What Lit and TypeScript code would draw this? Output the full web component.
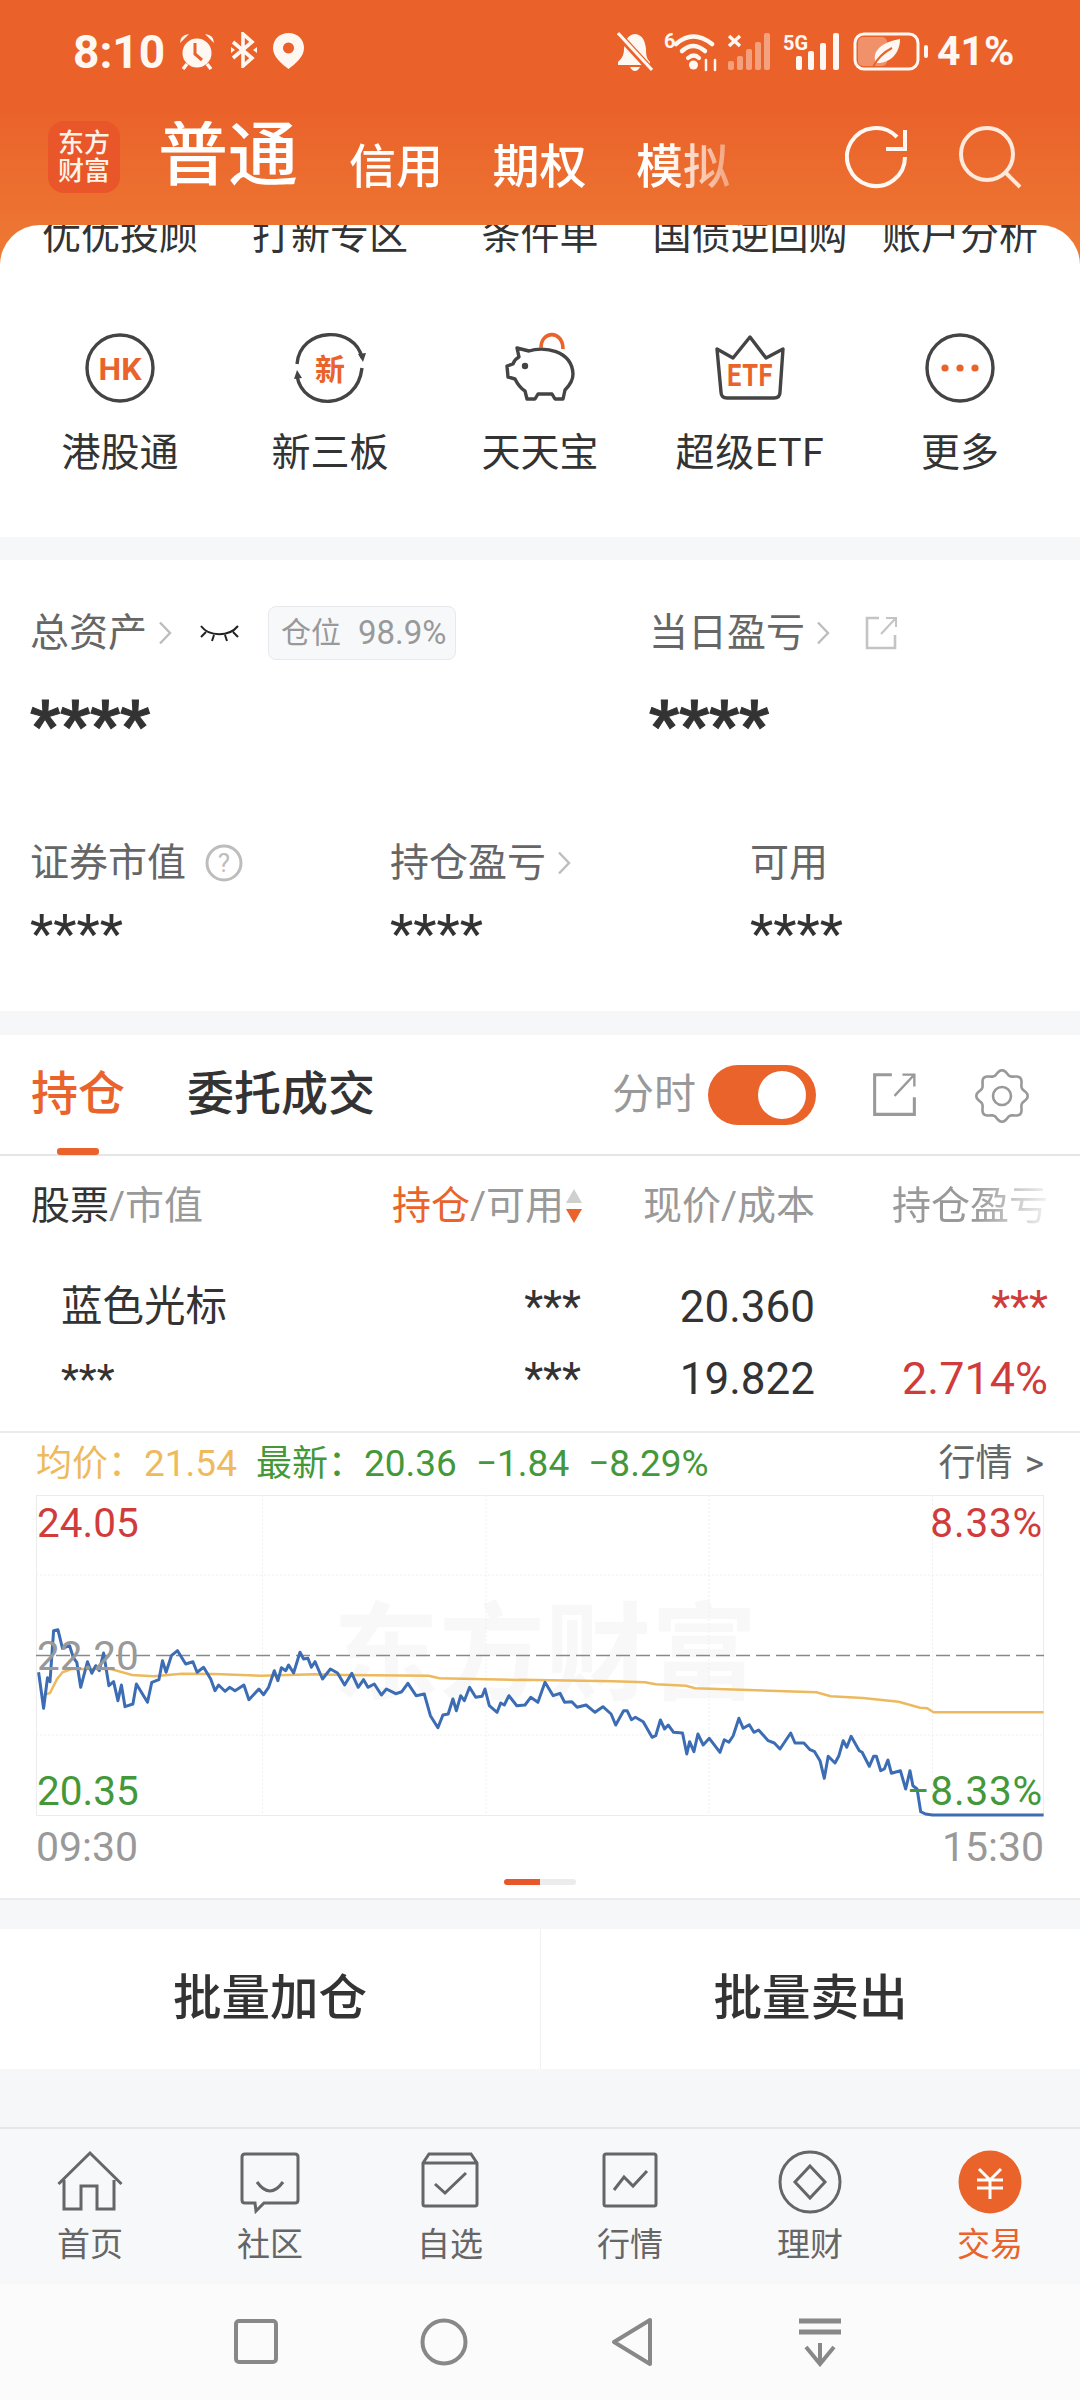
import { LitElement, html, css, svg } from "lit"
import { customElement } from "lit/decorators.js"

const ORANGE = "#e9632b"

// chart points read off the reference, in the crop coordinates of the two chart crops
const BLUE_A = [[108,700],[122,808],[133,716],[140,728],[150,575],[162,572],[175,628],[195,620],[205,655],[215,670],[226,745],[245,668],[257,703],[268,680],[278,695],[290,642],[305,740],[318,728],[330,785],[340,738],[350,803],[372,795],[382,735],[413,790],[425,730],[445,722],[455,665],[465,700],[480,650],[497,635],[520,675],[540,668],[552,700],[570,685],[590,720],[602,755],[612,738],[630,757],[643,745],[658,755],[683,738],[697,782],[725,750],[738,767],[752,745],[768,695],[778,725],[788,686],[800,695],[808,678],[822,702],[840,640],[850,660],[862,658],[872,685],[882,668],[903,720],[925,690],[945,702],[965,738],[985,703],[1003,745],[1018,722],[1030,745],[1048,735],[1068,768],[1082,750],[1108,764],[1125,758],[1142,733],[1165,770],[1188,765],[1205,830],[1226,866],[1240,828],[1255,825],[1268,780],[1278,815],[1290,770],[1300,785],[1315,745],[1332,775],[1350,772],[1358,750],[1370,800],[1392,820],[1402,792],[1412,798],[1425,770],[1447,800],[1470,798]]
const BLUE_B = [[30,775],[50,790],[70,730],[93,770],[112,763],[125,790],[145,788],[160,805],[185,798],[210,820],[232,803],[255,825],[268,858],[290,815],[300,815],[312,842],[323,835],[345,848],[370,895],[380,890],[393,843],[405,870],[415,858],[430,880],[455,882],[467,945],[475,908],[487,938],[498,885],[513,918],[530,898],[560,940],[572,902],[585,910],[597,890],[613,838],[625,868],[642,857],[655,880],[668,873],[695,905],[712,912],[728,930],[758,882],[770,912],[795,912],[812,932],[825,938],[840,965],[852,1018],[863,952],[882,972],[893,950],[905,905],[915,925],[927,892],[950,935],[958,940],[978,982],[990,952],[998,952],[1010,995],[1020,990],[1030,963],[1040,1003],[1065,995],[1080,1050],[1092,995],[1100,1040],[1112,1050],[1122,1118],[1135,1125],[1155,1128],[1466,1128]]
const AVG_A = [[122,768],[140,762],[160,720],[175,700],[200,690],[250,690],[310,690],[370,708],[430,712],[510,704],[600,705],[730,710],[880,706],[960,708],[1200,710],[1230,718],[1450,723]]
const AVG_B = [[0,722],[260,727],[350,730],[380,736],[465,740],[490,748],[830,760],[870,772],[960,777],[1060,788],[1120,806],[1140,808],[1158,820],[1466,820]]

function toChart(a: number[][], b: number[][]) {
  const left = a.map(([x, y]) => [x / 2.8 - 36, 1440 + y / 3 - 1496])
  const right = b.map(([x, y]) => [520 + x / 2.8 - 36, 1440 + y / 3 - 1496])
  return [...left, ...right].map(([x, y]) => `${x.toFixed(1)},${y.toFixed(1)}`).join(" ")
}

function gearPath(cx: number, cy: number) {
  const pts: string[] = []
  for (let i = 0; i < 96; i++) {
    const t = (i / 96) * Math.PI * 2
    const r = 23.5 + 2.2 * Math.cos(8 * t)
    pts.push(`${(cx + r * Math.sin(t)).toFixed(1)},${(cy - r * Math.cos(t)).toFixed(1)}`)
  }
  return pts.join(" ")
}

const chevron = (w = 16, h = 24) => html`<svg class="chev" width=${w} height=${h} viewBox="0 0 16 24" fill="none" stroke="#bdbdbd" stroke-width="2.4"><polyline points="3,1.5 13,12 3,22.5"/></svg>`

const openIcon = (size: number, color: string, sw: number) => html`<svg width=${size} height=${size} viewBox="0 0 34 34" fill="none" stroke=${color} stroke-width=${sw}>
  <path d="M15 2H3v30h28V19"/><path d="M17 18 31 3M22 2h10v9" stroke-width=${sw * 0.8}/></svg>`

const shortcutIcons = [
  svg`<circle cx="35" cy="35" r="33" stroke="#444" stroke-width="3.4" fill="none"/><text x="35" y="47" text-anchor="middle" class="svgt" font-size="32" font-weight="700" fill=${ORANGE}>HK</text>`,
  svg`<path d="M2 31C5 -6 60 -8 67 25M67 35C62 78 8 78 2 43" stroke="#444" stroke-width="3.4" fill="none"/><path d="M63 21 68 29 71 20ZM-1 46 2 37 7 45Z" fill="#444"/><text x="35" y="47" text-anchor="middle" class="svgt" font-size="30" font-weight="700" fill=${ORANGE}>新</text>`,
  svg`<path d="M12 15 24 18C38 13 67 17 68 41 68 48 64 53 60 57L58 66H50L47 61H33L30 66H22L20 58C15 55 12 50 10 46L3 44 2 33 8 31C9 28 12 25 14 24Z" stroke="#444" stroke-width="3.4" fill="none" stroke-linejoin="round"/><circle cx="20" cy="33" r="3.2" fill="#444"/><path d="M36 15C36 -3 58 -3 58 16" stroke=${ORANGE} stroke-width="3.6" fill="none"/>`,
  svg`<path d="M2 15 18 24 35 3 51 24 68 15 65 58Q65 64 59 64H12Q6 64 6 58Z" transform="translate(0 1)" stroke="#444" stroke-width="3.4" fill="none" stroke-linejoin="round"/><text x="35" y="53" text-anchor="middle" class="svgt" font-size="31" font-weight="700" textLength="46" lengthAdjust="spacingAndGlyphs" fill=${ORANGE}>ETF</text>`,
  svg`<circle cx="35" cy="35" r="33" stroke="#444" stroke-width="3.4" fill="none"/><circle cx="20" cy="35" r="3.6" fill=${ORANGE}/><circle cx="35" cy="35" r="3.6" fill=${ORANGE}/><circle cx="50" cy="35" r="3.6" fill=${ORANGE}/>`,
]

const navIcons = [
  svg`<path d="M1.5 34 33 3 64.5 34M7 30V59H24V36H40V59H57V30" fill="none" stroke="#666" stroke-width="3"/>`,
  svg`<path d="M5 4H55Q58 4 58 7V50Q58 53 55 53H24L16 61 15 53H5Q2 53 2 50V7Q2 4 5 4Z" fill="none" stroke="#666" stroke-width="3"/><path d="M17 32Q30 50 43 32" fill="none" stroke="#666" stroke-width="3"/>`,
  svg`<path d="M2 13 8 4H50L56 13V54Q56 56 54 56H4Q2 56 2 54ZM2 13H56" fill="none" stroke="#666" stroke-width="3"/><path d="M14 35 24 44 45 24" transform="translate(0 -1)" fill="none" stroke="#666" stroke-width="3"/>`,
  svg`<rect x="3" y="4" width="52" height="52" rx="2" fill="none" stroke="#666" stroke-width="3"/><path d="M13 40 23 27 32 36 46 21" fill="none" stroke="#666" stroke-width="3"/>`,
  svg`<circle cx="32" cy="32" r="30" fill="none" stroke="#666" stroke-width="3"/><path d="M32 16 47 32 32 48 17 32Z" fill="none" stroke="#666" stroke-width="3"/>`,
  svg`<circle cx="32" cy="32" r="31.5" fill=${ORANGE}/><path d="M21 19 32 30 43 19M19 30H45M19 38H45M32 30V49" fill="none" stroke="#fff" stroke-width="3"/>`,
]

@customElement("app-root")
export class AppRoot extends LitElement {
  static styles = css`
    :host {
      display: block;
      width: 1080px;
      height: 2400px;
      overflow: hidden;
      background: #f6f7f9;
      font-family: Roboto, "Noto Sans CJK SC", sans-serif;
      color: #333;
    }
    svg { display: block; flex: none; }
    .svgt { font-family: Roboto, "Noto Sans CJK SC", sans-serif; }

    .top {
      background: linear-gradient(#ea622a 40%, #ee7b35) no-repeat;
      background-size: 100% 270px;
    }
    .status {
      height: 100px;
      display: flex;
      align-items: flex-start;
      color: #fff7f2;
      font-weight: 700;
      padding: 32px 0 0 73px;
      box-sizing: border-box;
    }
    .time { font-size: 46px; line-height: 40px; width: 92px; margin-right: 13px; }
    .status-left { display: flex; gap: 14px; }
    .status-right { display: flex; align-items: flex-start; margin-left: auto; }
    .pct { font-size: 41px; line-height: 38px; width: 143px; box-sizing: border-box; }

    .title-row {
      height: 125px;
      box-sizing: border-box;
      padding: 21px 58px 0 48px;
      display: flex;
      align-items: flex-start;
      color: #fff;
    }
    .logo {
      width: 72px;
      height: 72px;
      border-radius: 16px;
      background: #e8562a;
      color: #fff3e8;
      font-size: 26px;
      line-height: 28px;
      font-weight: 500;
      text-align: center;
      padding-top: 8px;
      box-sizing: border-box;
      margin-right: 38px;
    }
    .acct-tabs {
      display: flex;
      align-items: flex-end;
      height: 70px;
      width: 574px;
      -webkit-mask-image: linear-gradient(90deg, #000 510px, rgba(0,0,0,.35) 574px);
      mask-image: linear-gradient(90deg, #000 510px, rgba(0,0,0,.35) 574px);
    }
    .acct-tabs span { font-size: 47px; line-height: 47px; margin-left: 49.5px; margin-bottom: 1px; font-weight: 500; white-space: nowrap; }
    .acct-tabs span.main { font-size: 70px; line-height: 70px; margin: 0 1.5px 0 0; }
    .title-icons { margin-left: auto; display: flex; gap: 49px; margin-top: 4px; }

    .card {
      background: #fff;
      border-radius: 40px 40px 0 0;
      height: 312px;
      overflow: hidden;
    }
    .clipped, .shortcuts { display: grid; grid-template-columns: repeat(5, 210px); padding: 0 15px; text-align: center; }
    .clipped { font-size: 39px; line-height: 38px; margin-top: -8px; color: #333; white-space: nowrap; }
    .shortcuts { margin-top: 78px; font-size: 39px; line-height: 38px; }
    .shortcuts svg { margin: 0 auto 31px; overflow: visible; }
    .shortcuts .latin { letter-spacing: 0.7px; }

    .assets { background: #fff; height: 451px; margin-top: 23px; padding: 0 30px; box-sizing: border-box; }
    .label { display: flex; align-items: center; font-size: 39px; line-height: 40px; height: 40px; color: #666; }
    .a-top { display: grid; grid-template-columns: 619px 1fr; padding-top: 53px; }
    .big { font-size: 66px; font-weight: 700; line-height: 67px; height: 67px; margin-top: 39px; color: #333; -webkit-text-stroke: 1px #333; }
    .a-bot { display: grid; grid-template-columns: repeat(3, 360px); margin-top: 84px; }
    .small { font-size: 54px; line-height: 53px; height: 53px; margin-top: 24px; color: #333; }
    .chev { margin-left: 10px; }
    .pill {
      display: flex;
      align-items: center;
      gap: 17px;
      width: 188px;
      height: 54px;
      box-sizing: border-box;
      padding-left: 12px;
      border: 1px solid #e8e9ec;
      border-radius: 8px;
      background: #f7f8fa;
      color: #999;
      font-size: 30px;
    }
    .pill b { font-weight: 400; font-size: 33px; }

    .positions { background: #fff; margin-top: 24px; }
    .pos-tabs { height: 121px; box-sizing: border-box; border-bottom: 2px solid #e6e6e6; display: flex; padding: 35px 0 0 31px; position: relative; }
    .pos-tabs > span { font-size: 47px; line-height: 47px; font-weight: 500; }
    .pos-tabs .alt { margin-left: 62px; }
    .bar { position: absolute; left: 57px; bottom: -1px; width: 42px; height: 7px; border-radius: 3px; background: #e9632b; }
    .pos-ctl { margin-left: auto; display: flex; align-items: flex-start; }
    .pos-ctl .fs { font-size: 42px; line-height: 41px; color: #999; margin-top: 4px; margin-right: 12px; }
    .toggle { width: 108px; height: 60px; border-radius: 30px; background: #e9632b; margin-top: -5px; margin-right: 56px; position: relative; }
    .toggle i { position: absolute; right: 10px; top: 6px; width: 48px; height: 48px; border-radius: 50%; background: #fff; }

    .thead, .trow { display: grid; font-size: 39px; line-height: 40px; }
    .thead { grid-template-columns: 361px 190px 233px 233px; padding: 30px 0 0 31px; height: 93px; box-sizing: border-box; color: #999; }
    .thead .r { text-align: right; }
    .thead .d { color: #333; }
    .thead .o { color: #e9632b; }
    .sorted { position: relative; white-space: nowrap; }
    .sort { position: absolute; right: -1px; top: 2px; }
    .fade {
      margin-left: 30px;
      white-space: nowrap;
      -webkit-mask-image: linear-gradient(90deg, #000 130px, transparent 215px);
      mask-image: linear-gradient(90deg, #000 130px, transparent 215px);
    }
    .trow { grid-template-columns: 329px 191px 234px 233px; padding-left: 61px; font-size: 44px; }
    .trow > div { text-align: right; height: 72px; line-height: 72px; }
    .trow > div.name { text-align: left; font-size: 41.5px; }
    .trow > div.pct-val { font-size: 45px; }
    .rows { padding-top: 22px; height: 184px; box-sizing: border-box; border-bottom: 2px solid #eaeaea; }
    .up { color: #d03c3c; }

    .legend { display: flex; height: 62px; padding: 8px 36px 0; font-size: 37px; line-height: 46px; gap: 19px; white-space: nowrap; box-sizing: border-box; }
    .legend span { flex: none; }
    .legend b { font-weight: 400; font-size: 36px; }
    .avg { color: #eeba5c; }
    .dn { color: #44983a; }
    .legend .more { margin-left: auto; color: #666; word-spacing: 3px; }

    .chart { position: relative; margin-left: 36px; width: 1008px; height: 321px; }
    .chart svg { position: absolute; left: 0; top: 0; overflow: visible; }
    .wm { position: absolute; left: 297px; top: 107px; font-size: 106px; line-height: 106px; font-weight: 700; color: #f8f8f8; white-space: nowrap; }
    .tick { position: absolute; font-size: 40.5px; line-height: 40px; }
    .t1 { top: 8px; }
    .t2 { top: 141px; }
    .t3 { top: 276px; }
    .tl { left: 1px; }
    .tr { right: 1px; letter-spacing: 0.8px; }
    .grey { color: #999; }
    .times { display: flex; justify-content: space-between; padding: 11px 36px 0; font-size: 41px; line-height: 40px; color: #999; height: 63px; box-sizing: border-box; }
    .pager { display: flex; justify-content: center; height: 19px; }
    .pager i { width: 36px; height: 6px; background: #ececec; border-radius: 0 3px 3px 0; }
    .pager i:first-child { background: #e8562a; border-radius: 3px 0 0 3px; }

    .chart-wrap { background: #fff; height: 467px; border-bottom: 2px solid #ececec; box-sizing: border-box; }

    .batch { display: grid; grid-template-columns: 540px 540px; background: #fff; height: 140px; margin-top: 29px; text-align: center; font-size: 48.5px; font-weight: 500; line-height: 140px; }
    .batch div + div { border-left: 1px solid #f0f0f0; }

    .tabbar { margin-top: 58px; height: 157px; border-top: 2px solid #e6e7e9; box-sizing: border-box; display: grid; grid-template-columns: repeat(6, 180px); background: #f7f8fa; text-align: center; font-size: 33px; line-height: 34px; color: #666; }
    .tabbar svg { margin: 21px auto 14px; }
    .tabbar .act { color: #e9632b; }

    .sysnav { height: 116px; background: #fbfbfc; display: grid; grid-template-columns: repeat(4, 188px); padding-left: 162px; justify-items: center; padding-top: 33px; box-sizing: border-box; }
  `

  renderStatus() {
    return html`<div class="status">
      <div class="time">8:10</div>
      <div class="status-left">
        <svg width="38" height="38" viewBox="0 0 38 38" fill="#fff7f2">
          <circle cx="19" cy="21" r="14.500"/><path d="M17 11V22L24 28" stroke="#ea622a" stroke-width="3" fill="none"/>
          <path d="M2 11Q2 3 11 2ZM36 11Q36 3 27 2Z"/><path d="M9 32 5 37M29 32 33 37" stroke="#fff7f2" stroke-width="3.400"/>
        </svg>
        <svg width="28" height="36" viewBox="0 0 28 36" fill="none" stroke="#fff7f2" stroke-width="3.600"><path d="M3 10 22 26 13 34V2L22 10 3 26"/><path d="M1 15 5 18 1 21ZM27 15 23 18 27 21Z" fill="#fff7f2" stroke="none"/></svg>
        <svg width="33" height="38" viewBox="0 0 33 38"><path fill-rule="evenodd" fill="#fff7f2" d="M16.5 1C7.5 1 1 7.5 1 16 1 25 10 32 16.5 37 23 32 32 25 32 16 32 7.5 25.500 1 16.500 1ZM16.500 10.500A5.500 5.500 0 1 1 16.499 10.500Z"/></svg>
      </div>
      <div class="status-right">
        <svg width="36" height="40" viewBox="0 0 36 40" style="margin-right:11px" fill="#fff7f2">
          <path d="M18 2C10 3 8 9 7 17 7 24 4 27 1 30V33H33V30C30 27 29 24 29 17 28 9 26 3 18 2ZM13 35H23Q21 39 18 39 15 39 13 35Z"/>
          <path d="M0 1 34 38" stroke="#ea622a" stroke-width="7"/><path d="M1 1 35 38" stroke="#fff7f2" stroke-width="3"/>
        </svg>
        <svg width="54" height="40" viewBox="0 0 54 40" style="margin-right:9px" fill="none" stroke="#fff7f2" stroke-linecap="round">
          <text x="0" y="16" class="svgt" font-size="20" font-weight="700" fill="#fff7f2" stroke="none">6</text>
          <path d="M12 12Q29 -3 48 12" stroke-width="4.500"/><path d="M18 19Q29 9 41 19" stroke-width="4.500"/><path d="M24 26Q30 21 35 26" stroke-width="4.200"/>
          <circle cx="29.500" cy="33" r="4.500" fill="#fff7f2" stroke="none"/>
          <path d="M43 28V38M52 28V38" stroke-width="2.500" transform="translate(-1 0)"/>
        </svg>
        <svg width="44" height="40" viewBox="0 0 44 40" style="margin-right:12px" fill="#fff7f2">
          <g opacity=".42"><rect x="1" y="29" width="6" height="9" rx="2"/><rect x="10" y="24" width="6" height="14" rx="2"/><rect x="19" y="17" width="6" height="21" rx="2"/><rect x="28" y="10" width="6" height="28" rx="2"/><rect x="37" y="1" width="6" height="37" rx="2"/></g>
          <path d="M2 4 13 14M13 4 2 14" stroke="#fff7f2" stroke-width="3.400"/>
        </svg>
        <svg width="57" height="40" viewBox="0 0 57 40" style="margin-right:13px" fill="#fff7f2">
          <text x="0" y="18" class="svgt" font-size="21" font-weight="700" textLength="25" lengthAdjust="spacingAndGlyphs">5G</text>
          <rect x="13" y="24" width="6" height="14" rx="2"/><rect x="25" y="19" width="6" height="19" rx="2"/><rect x="37" y="11" width="6" height="27" rx="2"/><rect x="50" y="1" width="6" height="37" rx="2"/>
        </svg>
        <svg width="76" height="40" viewBox="0 0 76 40" fill="none" style="margin-right:8px">
          <rect x="2" y="2" width="63" height="35" rx="9" stroke="#fff7f2" stroke-width="3"/>
          <rect x="5" y="5" width="29" height="29" rx="5" fill="#fff7f2" opacity=".32"/>
          <path d="M23 31C18 20 28 10 47 7 47 22 36 32 23 31Z" fill="#fff7f2"/><path d="M20 35C25 25 31 20 39 16" stroke="#ea622a" stroke-width="2"/>
          <rect x="71" y="13" width="4" height="13" rx="2" fill="#fff7f2"/>
        </svg>
        <div class="pct">41%</div>
      </div>
    </div>`
  }

  renderTitle() {
    return html`<div class="title-row">
      <div class="logo">东方<br>财富</div>
      <div class="acct-tabs">
        <span class="main">普通</span><span>信用</span><span>期权</span><span>模拟</span>
      </div>
      <div class="title-icons">
        <svg width="64" height="64" viewBox="0 0 64 64" fill="none" stroke="#fff8f2" stroke-width="4"><path d="M52 12A29 29 0 1 0 60 32"/><path d="M42 24H61V5" transform="translate(-1 0)"/></svg>
        <svg width="64" height="64" viewBox="0 0 64 64" fill="none" stroke="#ffe9dc" stroke-width="4"><circle cx="29" cy="29" r="26"/><path d="M47 47 62 62"/></svg>
      </div>
    </div>`
  }

  renderAssets() {
    return html`<div class="assets">
      <div class="a-top">
        <div>
          <div class="label">总资产${chevron()}
            <svg style="margin:0 28px 0 26px" width="41" height="20" viewBox="0 0 41 20" fill="none" stroke="#222" stroke-width="2"><path d="M2 3C10 14 30 14 39 3M7 9 2 14M15 12 13 18M26 12 28 18M34 9 39 14"/></svg>
            <div class="pill">仓位<b>98.9%</b></div>
          </div>
          <div class="big">****</div>
        </div>
        <div>
          <div class="label">当日盈亏${chevron()}<span style="margin-left:33px">${openIcon(34, "#c4c4c4", 2.6)}</span></div>
          <div class="big">****</div>
        </div>
      </div>
      <div class="a-bot">
        <div>
          <div class="label">证券市值
            <svg style="margin-left:19px" width="38" height="38" viewBox="0 0 38 38"><circle cx="19" cy="19" r="17" fill="none" stroke="#bdbdbd" stroke-width="3"/><text x="19" y="28" text-anchor="middle" class="svgt" font-size="26" fill="#bdbdbd">?</text></svg>
          </div>
          <div class="small">****</div>
        </div>
        <div>
          <div class="label">持仓盈亏${chevron()}</div>
          <div class="small">****</div>
        </div>
        <div>
          <div class="label">可用</div>
          <div class="small">****</div>
        </div>
      </div>
    </div>`
  }

  renderPositions() {
    return html`<div class="positions">
      <div class="pos-tabs">
        <span style="color:#e9632b">持仓</span><span class="alt">委托成交</span>
        <div class="bar"></div>
        <div class="pos-ctl">
          <div class="fs">分时</div>
          <div class="toggle"><i></i></div>
          <svg style="margin-top:2px;margin-right:58px" width="45" height="45" viewBox="0 0 34 34" fill="none" stroke="#999" stroke-width="2.300"><path d="M15 2H2V32H32V19"/><path d="M17 18 31 3M23 2H32V11" stroke-width="1.800"/></svg>
          <svg style="margin-top:-1px;margin-right:51px" width="54" height="54" viewBox="0 0 54 54" fill="none" stroke="#999" stroke-width="2.600"><polygon points=${gearPath(27, 27)}/><circle cx="27" cy="27" r="9"/></svg>
        </div>
      </div>
      <div class="thead">
        <div><span class="d">股票</span>/市值</div>
        <div class="sorted"><span class="o">持仓</span>/可用
          <svg class="sort" width="18" height="36" viewBox="0 0 18 36"><path d="M9 1 17 15H1Z" fill="#cfcfcf"/><path d="M1 21H17L9 35Z" fill="#e9632b"/></svg>
        </div>
        <div class="r">现价/成本</div>
        <div class="r fade">持仓盈亏</div>
      </div>
      <div class="rows">
        <div class="trow">
          <div class="name">蓝色光标</div><div>***</div><div>20.360</div><div class="up">***</div>
          <div class="name">***</div><div>***</div><div>19.822</div><div class="up pct-val">2.714%</div>
        </div>
      </div>
    </div>`
  }

  renderChart() {
    const blue = toChart(BLUE_A, BLUE_B)
    const avg = toChart(AVG_A, AVG_B)
    return html`<div class="chart-wrap">
      <div class="legend">
        <span class="avg"><b>均价：</b>21.54</span>
        <span class="dn"><b>最新：</b>20.36</span><span class="dn">−1.84</span><span class="dn">−8.29%</span>
        <span class="more">行情 &gt;</span>
      </div>
      <div class="chart">
        <div class="wm">东方财富</div>
        <svg width="1008" height="321" viewBox="0 0 1008 321" fill="none">
          <rect x="0.500" y="0.500" width="1007" height="320" stroke="#ececec"/>
          <path d="M0 80H1008M0 240H1008M226.500 0V321M450 0V321M673 0V321M896.500 0V321" stroke="#efefef" stroke-dasharray="2 2"/>
          <path d="M0 160.500H1008" stroke="#888" stroke-width="1.500" stroke-dasharray="14 6"/>
          <polyline points=${avg} stroke="#edb95e" stroke-width="2.500"/>
          <polyline points=${blue} stroke="#3c6db4" stroke-width="3" stroke-linejoin="round"/>
        </svg>
        <div class="tick t1 tl up">24.05</div>
        <div class="tick t1 tr up">8.33%</div>
        <div class="tick t2 tl grey">22.20</div>
        <div class="tick t3 tl dn">20.35</div>
        <div class="tick t3 tr dn">−8.33%</div>
      </div>
      <div class="times"><span>09:30</span><span>15:30</span></div>
      <div class="pager"><i></i><i></i></div>
    </div>`
  }

  render() {
    const clipped = ["优优投顾", "打新专区", "条件单", "国债逆回购", "账户分析"]
    const shortcuts = ["港股通", "新三板", "天天宝", "超级ETF", "更多"]
    const nav = ["首页", "社区", "自选", "行情", "理财", "交易"]
    const navWidths = [66, 60, 58, 58, 64, 64]
    return html`
      <div class="top">
        ${this.renderStatus()}
        ${this.renderTitle()}
        <div class="card">
          <div class="clipped">${clipped.map((t) => html`<div>${t}</div>`)}</div>
          <div class="shortcuts">
            ${shortcuts.map((t, i) => html`<div class=${t.includes("ETF") ? "latin" : ""}>
              <svg width="70" height="70" viewBox="0 0 70 70">${shortcutIcons[i]}</svg>${t}
            </div>`)}
          </div>
        </div>
      </div>
      ${this.renderAssets()}
      ${this.renderPositions()}
      ${this.renderChart()}
      <div class="batch"><div>批量加仓</div><div>批量卖出</div></div>
      <div class="tabbar">
        ${nav.map((t, i) => html`<div class=${i === 5 ? "act" : ""}>
          <svg width=${navWidths[i]} height="64" viewBox="0 0 ${navWidths[i]} 64">${navIcons[i]}</svg>${t}
        </div>`)}
      </div>
      <div class="sysnav">
        <svg width="46" height="50" viewBox="0 0 46 50" fill="none" stroke="#888" stroke-width="4"><rect x="3" y="4" width="40" height="41" rx="3"/></svg>
        <svg width="50" height="50" viewBox="0 0 50 50" fill="none" stroke="#888" stroke-width="4"><circle cx="25" cy="25" r="21.500"/></svg>
        <svg width="46" height="50" viewBox="0 0 46 50" fill="none" stroke="#888" stroke-width="4" stroke-linejoin="round"><path d="M41 3V47L5 25Z"/></svg>
        <svg width="46" height="50" viewBox="0 0 46 50" fill="none" stroke="#888" stroke-width="4"><path d="M2 4H44M2 15H44" stroke-width="5"/><path d="M23 26V46M9 30 23 47 37 30"/></svg>
      </div>
    `
  }
}
